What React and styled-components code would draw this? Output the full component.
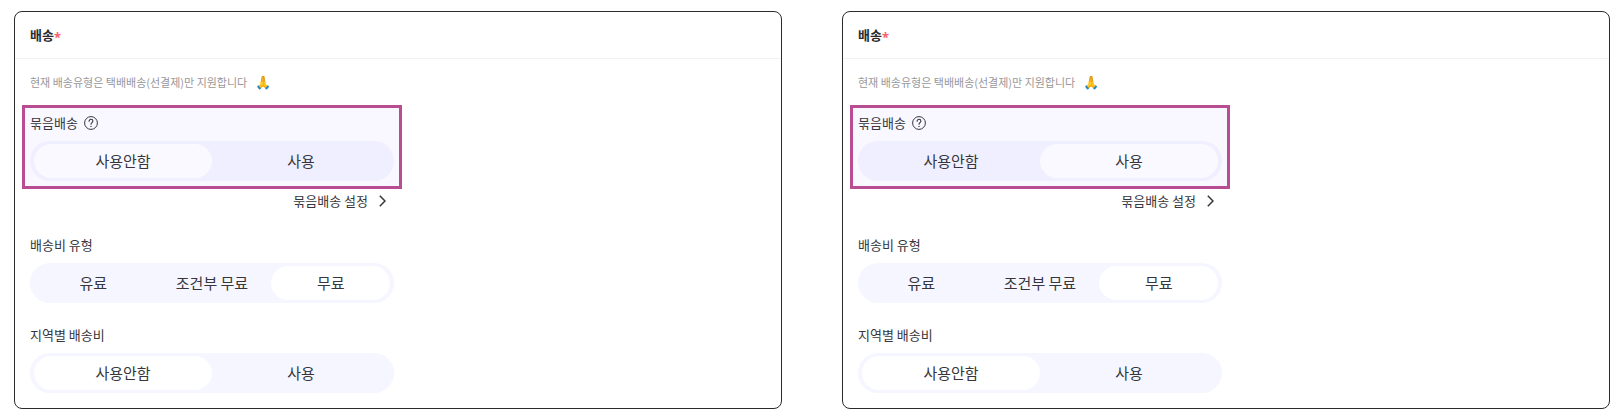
import React, { useId, useState } from "react";
import styled, { createGlobalStyle } from "styled-components";

const GlobalStyle = createGlobalStyle`
  *, *::before, *::after { box-sizing: border-box; }
  body {
    margin: 0;
    background: #ffffff;
    color: #36363c;
    font-family: "Noto Sans CJK KR", "Noto Sans", sans-serif;
    font-size: 13px;
    line-height: 20px;
  }
`;

const Page = styled.main`
  display: grid;
  grid-template-columns: repeat(2, minmax(0, 1fr));
  gap: 60px;
  padding: 11px 10px 8px 14px;
`;

const Card = styled.section`
  border: 1px solid #2b2b2d;
  border-radius: 8px;
  background: #ffffff;
`;

const CardHeader = styled.header`
  padding: 13px 15px;
  border-bottom: 1px solid #f2f2f3;
`;

const Title = styled.h2`
  display: flex;
  height: 20px;
  margin: 0;
  font-size: 13px;
  line-height: 20px;
  font-weight: 700;
  color: #2b2b2d;
`;

const Required = styled.span`
  padding-top: 2px;
  color: #fa5f6c;
  font-family: "Noto Sans", sans-serif;
`;

const CardBody = styled.form`
  max-width: 394px;
  padding: 13px 7px 15px;
`;

const Note = styled.p`
  display: flex;
  gap: 8px;
  margin: 0 0 13px;
  padding: 0 8px;
  font-size: 11px;
  color: #97979b;
  white-space: nowrap;
`;

const Emoji = styled.span`
  height: 20px;
  font-size: 13px;
`;

const Field = styled.fieldset`
  min-width: 0;
  margin: 0;
  border: ${(p) => (p.$highlighted ? "3px solid #b94d93" : "0")};
  padding: ${(p) => (p.$highlighted ? "5px" : "0 8px")};
  background: ${(p) => (p.$highlighted ? "#f9f7ff" : "transparent")};

  & + & { margin-top: 22px; }
`;

const FieldLabel = styled.div`
  display: flex;
  align-items: center;
  gap: 6px;
  margin-bottom: 8px;
`;

const HelpButton = styled.button`
  display: flex;
  padding: 0;
  border: 0;
  background: none;
  color: inherit;
`;

const Segments = styled.div`
  display: flex;
  height: 40px;
  padding: 3px 4px;
  border-radius: 20px;
  background: ${(p) => (p.$tinted ? "#f0efff" : "#f5f6ff")};
`;

const Segment = styled.label`
  flex: 1 1 0;
  display: flex;
  align-items: center;
  justify-content: center;
  border-radius: 17px;
  font-size: 15px;
  cursor: pointer;

  &:has(input:checked) { background: ${(p) => (p.$tinted ? "#faf9ff" : "#ffffff")}; }
  &:has(input:focus-visible) { outline: 2px solid #8d86e8; }
`;

const Radio = styled.input`
  appearance: none;
  width: 0;
  height: 0;
  margin: 0;
  outline: none;
`;

const LinkRow = styled.div`
  display: flex;
  justify-content: flex-end;
  margin: 2px 0 24px;
  padding: 0 16px;
`;

const SettingsLink = styled.a`
  display: flex;
  align-items: center;
  gap: 11px;
  color: inherit;
  text-decoration: none;
`;

function HelpIcon() {
  return (
    <svg width="14" height="14" viewBox="0 0 14 14" fill="none" stroke="currentColor" aria-hidden="true">
      <circle cx="7" cy="7" r="6.4" strokeWidth="1" />
      <path d="M5.1 5.2C5.1 4 6 3.3 7 3.3s1.9.7 1.9 1.8c0 1.4-1.9 1.6-1.9 3.2" strokeWidth="1.1" strokeLinecap="round" />
      <circle cx="7" cy="10.4" r=".7" fill="currentColor" stroke="none" />
    </svg>
  );
}

function ChevronIcon() {
  return (
    <svg width="7" height="12" viewBox="0 0 7 12" fill="none" stroke="currentColor" strokeWidth="1.5" aria-hidden="true">
      <path d="M.8.7 6 6 .8 11.3" />
    </svg>
  );
}

function SegmentedField({ label, options, initial, highlighted, help }) {
  const [value, setValue] = useState(initial);
  const id = useId();
  return (
    <Field $highlighted={highlighted} role="radiogroup" aria-labelledby={`${id}-label`}>
      <FieldLabel>
        <span id={`${id}-label`}>{label}</span>
        {help && (
          <HelpButton type="button" aria-label="도움말">
            <HelpIcon />
          </HelpButton>
        )}
      </FieldLabel>
      <Segments $tinted={highlighted}>
        {options.map((option) => (
          <Segment key={option} $tinted={highlighted}>
            <Radio
              type="radio"
              name={id}
              value={option}
              checked={value === option}
              onChange={() => setValue(option)}
            />
            {option}
          </Segment>
        ))}
      </Segments>
    </Field>
  );
}

function ShippingCard({ bundle }) {
  return (
    <Card>
      <CardHeader>
        <Title>
          배송<Required>*</Required>
        </Title>
      </CardHeader>
      <CardBody>
        <Note>
          현재 배송유형은 택배배송(선결제)만 지원합니다
          <Emoji>🙏</Emoji>
        </Note>
        <SegmentedField label="묶음배송" options={["사용안함", "사용"]} initial={bundle} highlighted help />
        <LinkRow>
          <SettingsLink href="#bundle">
            묶음배송 설정
            <ChevronIcon />
          </SettingsLink>
        </LinkRow>
        <SegmentedField label="배송비 유형" options={["유료", "조건부 무료", "무료"]} initial="무료" />
        <SegmentedField label="지역별 배송비" options={["사용안함", "사용"]} initial="사용안함" />
      </CardBody>
    </Card>
  );
}

export default function App() {
  return (
    <>
      <GlobalStyle />
      <Page>
        <ShippingCard bundle="사용안함" />
        <ShippingCard bundle="사용" />
      </Page>
    </>
  );
}
